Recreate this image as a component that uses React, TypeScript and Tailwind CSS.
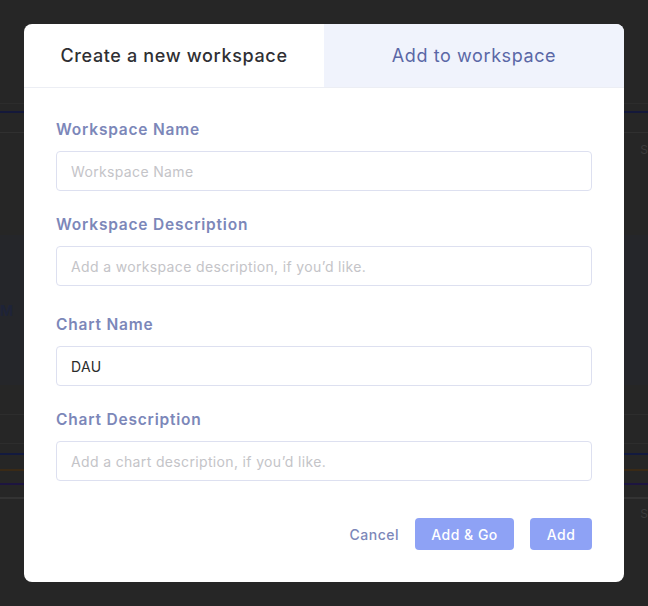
import React from "react";

const font = { fontFamily: "Inter, 'Noto Sans', sans-serif" };

function Field({ label, placeholder, value }: { label: string; placeholder: string; value?: string }) {
  return (
    <div className="flex flex-col">
      <label className="text-[15.5px] font-semibold tracking-[0.8px] text-[#7c87b9] leading-[20px]">{label}</label>
      <input
        readOnly
        defaultValue={value}
        placeholder={placeholder}
        className="mt-[11px] h-[40px] w-full rounded-[4px] border border-[#dde0f0] px-[14px] text-[14px] tracking-[0.35px] text-[#2b2b2b] placeholder:text-[#c4c4c8] outline-none"
      />
    </div>
  );
}

export default function App() {
  return (
    <div className="relative h-[606px] w-[648px] overflow-hidden bg-[#262626]" style={font}>
      {/* dimmed page behind the modal */}
      <div className="flex flex-col">
        <div className="h-[104px] border-b border-[#2c2c2c]" />
        <div className="h-[9px] border-b-2 border-[#14183a]" />
        <div className="h-[20px] border-b border-[#303030]" />
        <div className="flex h-[102px] justify-end pt-[8px] text-[12px] text-[#3b3b3b]">S</div>
        <div className="flex h-[150px] items-center bg-[#25262a]">
          <span className="text-[14px] font-bold text-[#1e2338]">M</span>
        </div>
        <div className="h-[30px] border-b border-[#2d2d2d]" />
        <div className="h-[29px] border-b border-[#2d2d2d]" />
        <div className="h-[11px] border-b-2 border-[#131a3f]" />
        <div className="h-[16px] border-b-2 border-[#3a2a16]" />
        <div className="h-[14px] border-b-2 border-[#1d1540]" />
        <div className="h-[14px] border-b-2 border-[#333]" />
        <div className="flex justify-end pt-[6px] text-[12px] text-[#3b3b3b]">S</div>
      </div>

      {/* modal overlay */}
      <div className="absolute left-[24px] top-[24px] h-[558px] w-[600px] overflow-hidden rounded-[8px] bg-white">
        <div className="flex h-[64px] border-b border-[#eceef4]">
          <div className="flex flex-1 items-center justify-center text-[18px] font-medium tracking-[0.65px] text-[#2f2f33]">
            Create a new workspace
          </div>
          <div className="flex flex-1 items-center justify-center bg-[#f0f3fc] text-[18px] tracking-[0.6px] text-[#5a67a6]">
            Add to workspace
          </div>
        </div>
        <div className="flex flex-col gap-[24px] px-[32px] pt-[32px]">
          <Field label="Workspace Name" placeholder="Workspace Name" />
          <Field label="Workspace Description" placeholder="Add a workspace description, if you’d like." />
          <div className="mt-[5px]">
            <Field label="Chart Name" placeholder="" value="DAU" />
          </div>
          <Field label="Chart Description" placeholder="Add a chart description, if you’d like." />
        </div>
        <div className="mt-[37px] flex items-center justify-end gap-[16px] px-[32px]">
          <button className="text-[14px] font-medium tracking-[0.5px] text-[#7c87b9]">Cancel</button>
          <button className="h-[32px] w-[99px] rounded-[4px] bg-[#8ea2f5] text-[14px] font-medium tracking-[0.5px] text-white">
            Add &amp; Go
          </button>
          <button className="h-[32px] w-[62px] rounded-[4px] bg-[#8ea2f5] text-[14px] font-medium tracking-[0.5px] text-white">
            Add
          </button>
        </div>
      </div>
    </div>
  );
}
